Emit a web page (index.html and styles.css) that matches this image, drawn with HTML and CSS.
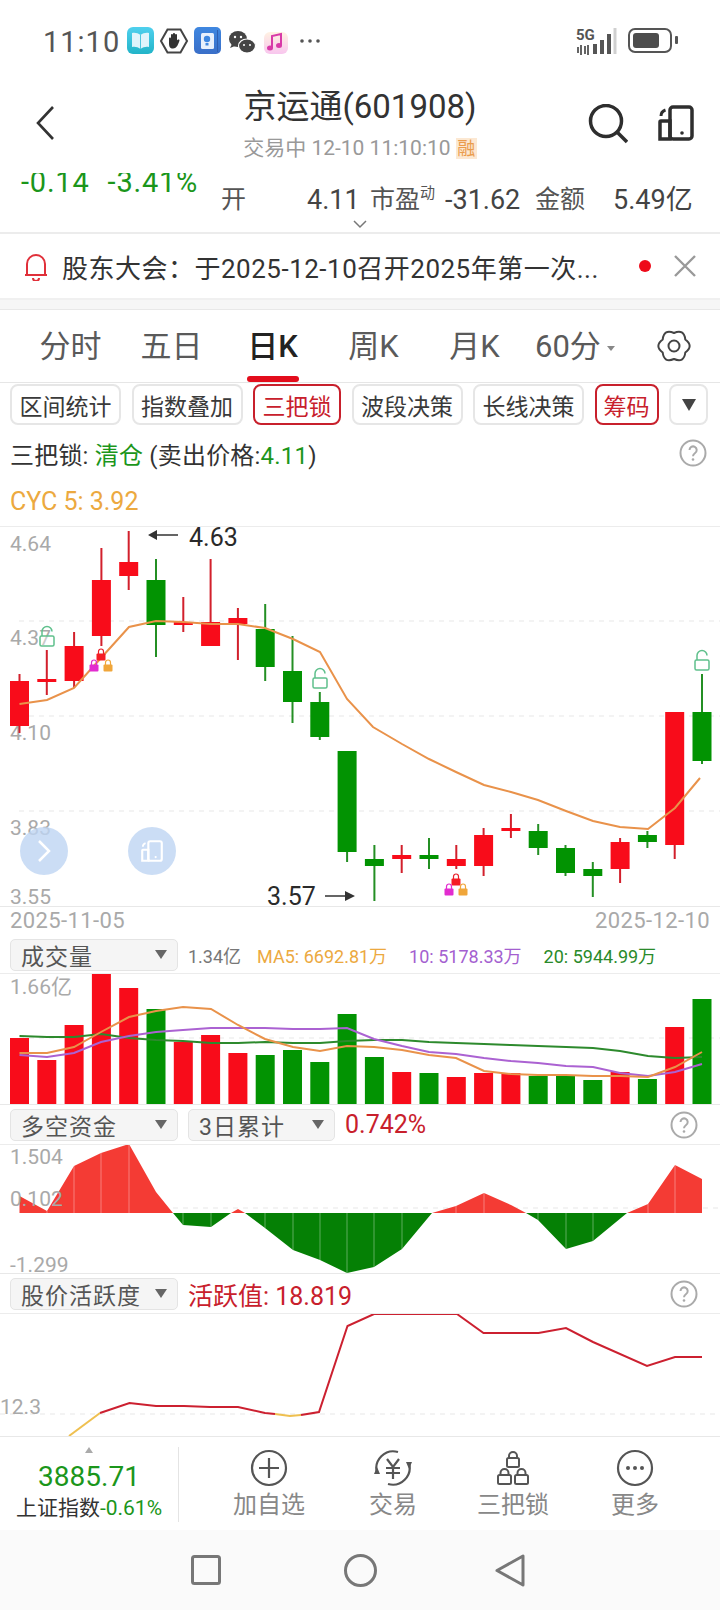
FILE: index.html
```html
<!DOCTYPE html>
<html lang="zh-CN">
<head>
    <meta charset="UTF-8">
    <meta name="viewport" content="width=device-width, initial-scale=1.0">
    <title>京运通(601908)</title>
    <link rel="stylesheet" href="styles.css">
</head>
<body>
<svg class="defs" width="0" height="0">
    <defs>
        <linearGradient id="book-bg" x1="0" y1="0" x2="0" y2="1"><stop offset="0" stop-color="#4fd0ee"/><stop offset="1" stop-color="#22b4c8"/></linearGradient>
        <linearGradient id="note-bg" x1="0" y1="0" x2="0" y2="1"><stop offset="0" stop-color="#3f87e0"/><stop offset="1" stop-color="#3a6fc8"/></linearGradient>
        <linearGradient id="music-bg" x1="0" y1="0" x2="0" y2="1"><stop offset="0" stop-color="#fff2e2"/><stop offset="1" stop-color="#f8c6ee"/></linearGradient>
        <symbol id="lock-open" viewBox="0 0 16 22">
            <path d="M3 11V6.500a5 5 0 0 1 10 0" fill="none" stroke="#5fc08c" stroke-width="1.500"/>
            <rect x="1" y="11" width="14" height="10" rx="1.500" fill="#fff" fill-opacity=".4" stroke="#5fc08c" stroke-width="1.500"/>
        </symbol>
        <symbol id="lock-red" viewBox="0 0 10 13">
            <path d="M2.500 6V3.500a2.500 2.500 0 0 1 5 0V6" fill="none" stroke="#e8202a" stroke-width="1.200"/>
            <rect x=".5" y="5.500" width="9" height="7" rx="1" fill="#f51c24"/>
        </symbol>
        <symbol id="lock-pink" viewBox="0 0 10 13">
            <path d="M2.500 6V3.500a2.500 2.500 0 0 1 5 0V6" fill="none" stroke="#e22ccf" stroke-width="1.200"/>
            <rect x=".5" y="5.500" width="9" height="7" rx="1" fill="#e22ccf"/>
        </symbol>
        <symbol id="lock-orange" viewBox="0 0 10 13">
            <path d="M2.500 6V3.500a2.500 2.500 0 0 1 5 0V6" fill="none" stroke="#f0a63a" stroke-width="1.200"/>
            <rect x=".5" y="5.500" width="9" height="7" rx="1" fill="#f0a63a"/>
        </symbol>
        <symbol id="help" viewBox="0 0 28 28">
            <circle cx="14" cy="14" r="12.500" fill="none" stroke="#aaa" stroke-width="2"/>
            <path d="M10.500 11a3.600 3.600 0 1 1 5.600 3c-1.400 1-2.100 1.600-2.100 3.200" fill="none" stroke="#aaa" stroke-width="2"/>
            <circle cx="14" cy="20.500" r="1.300" fill="#aaa"/>
        </symbol>
        <symbol id="rotate" viewBox="0 0 36 36">
            <rect x="12" y="2" width="22" height="32" rx="3" fill="none" stroke="currentColor" stroke-width="3.500"/>
            <path d="M2 34V17a1 1 0 0 1 1-1h9v18z" fill="none" stroke="currentColor" stroke-width="3.500"/>
            <path d="M3 11c0-3 1.500-5 4.500-6" fill="none" stroke="currentColor" stroke-width="3"/>
            <circle cx="24" cy="28" r="1.800" fill="currentColor"/>
        </symbol>
    </defs>
</svg>

<div class="status">
    <span class="status-time">11:10</span>
    <svg class="status-apps" width="280" height="30" viewBox="0 0 280 30">
        <rect x="0" y="1" width="27" height="27" rx="6" fill="url(#book-bg)"/>
        <path d="M13.500 9C11 7 8 6.500 5 7v14c3-.5 6 0 8.500 2 2.500-2 5.500-2.500 8.500-2V7c-3-.5-6 0-8.500 2z" fill="#dff4fb"/>
        <path d="M13.500 9v14" stroke="#4fc6de" stroke-width="1"/>
        <path d="M34 15l6.500-11.500h13L60 15l-6.500 11.500h-13z" fill="#fff" stroke="#444" stroke-width="2"/>
        <path d="M42 12.500c0-1.500 2-1.500 2 0V9c0-1.500 2-1.500 2 0V8c0-1.500 2-1.500 2 0v1c0-1.500 2-1.500 2 0v5.500c.5-1 2.500-1.500 2.500 0-1 3-2.500 8-6.500 8-3 0-4-2-4-5z" fill="#333"/>
        <rect x="67" y="1" width="27" height="27" rx="5" fill="url(#note-bg)"/>
        <rect x="74" y="7" width="13" height="16" rx="1.500" fill="#e8f0fc"/>
        <circle cx="80" cy="13" r="3.200" fill="#3f87e0"/>
        <rect x="78.500" y="17" width="3" height="2.500" fill="#3f87e0"/>
        <rect x="90" y="4" width="1" height="22" fill="#2f5fb0"/>
        <ellipse cx="111" cy="13" rx="9" ry="8" fill="#444"/>
        <path d="M105 18l-2 4 5-2z" fill="#444"/>
        <ellipse cx="120" cy="20" rx="8.500" ry="7" fill="#444" stroke="#fff" stroke-width="1.200"/>
        <circle cx="108" cy="11" r="1.200" fill="#fff"/>
        <circle cx="114" cy="11" r="1.200" fill="#fff"/>
        <circle cx="117" cy="19" r="1" fill="#fff"/>
        <circle cx="123" cy="19" r="1" fill="#fff"/>
        <rect x="137" y="6" width="24" height="22" rx="6" fill="url(#music-bg)"/>
        <path d="M145 22V10l9-2v11" fill="none" stroke="#d83aa8" stroke-width="2"/>
        <ellipse cx="143" cy="22" rx="3" ry="2.500" fill="#d83aa8"/>
        <ellipse cx="152" cy="19.500" rx="3" ry="2.500" fill="#d83aa8"/>
        <circle cx="175" cy="15" r="1.800" fill="#555"/>
        <circle cx="183" cy="15" r="1.800" fill="#555"/>
        <circle cx="191" cy="15" r="1.800" fill="#555"/>
    </svg>
    <svg class="status-signal" width="102" height="30" viewBox="0 0 102 30">
        <text class="net-text" x="0" y="13">5G</text>
        <path d="M2 20v6M5 18v10M9 19v8M12 18v10" stroke="#555" stroke-width="1.800"/>
        <path d="M19 17v10M26 13v14M33 7v20" stroke="#555" stroke-width="4"/>
        <path d="M39 1v26" stroke="#d0d0d0" stroke-width="3"/>
        <rect x="53" y="2" width="42" height="23" rx="6" fill="none" stroke="#555" stroke-width="2"/>
        <rect x="57" y="6" width="26" height="15" rx="3" fill="#4d4d4d"/>
        <rect x="99" y="9" width="3" height="8" rx="1" fill="#555"/>
    </svg>
</div>

<header class="head">
    <svg class="back" width="20" height="36" viewBox="0 0 20 36">
        <path d="M18 2L3 18l15 16" fill="none" stroke="#333" stroke-width="2.600"/>
    </svg>
    <div class="head-title">
        <h1>京运通(601908)</h1>
        <p>交易中 12-10 11:10:10 <span class="badge">融</span></p>
    </div>
    <div class="head-tools">
        <svg width="40" height="40" viewBox="0 0 40 40">
            <circle cx="18" cy="17" r="15.500" fill="none" stroke="#2e2e2e" stroke-width="3.500"/>
            <path d="M29 28l10 10" stroke="#2e2e2e" stroke-width="3.500"/>
        </svg>
        <svg class="head-rotate" width="36" height="36"><use href="#rotate"/></svg>
    </div>
</header>

<section class="quote">
    <div class="change">
        <span>-0.14</span>
        <span>-3.41%</span>
    </div>
    <div class="stats">
        <span class="stat-label">开</span>
        <span>4.11</span>
        <span class="stat-label">市盈<sup>动</sup></span>
        <span>-31.62</span>
        <span class="stat-label">金额</span>
        <span>5.49亿</span>
    </div>
    <svg class="more-arrow" width="14" height="9" viewBox="0 0 14 9">
        <path d="M1 1l6 6 6-6" fill="none" stroke="#777" stroke-width="1.500"/>
    </svg>
</section>

<section class="notice">
    <svg width="24" height="29" viewBox="0 0 24 29">
        <path d="M3 23V12a9 9 0 0 1 18 0v11z" fill="none" stroke="#e0303a" stroke-width="2" stroke-linejoin="round"/>
        <path d="M1 23h22" stroke="#e0303a" stroke-width="2"/>
        <path d="M9 26a3 3 0 0 0 6 0" fill="none" stroke="#e0303a" stroke-width="2"/>
    </svg>
    <p class="notice-text">股东大会：于2025-12-10召开2025年第一次...</p>
    <span class="notice-dot"></span>
    <svg class="notice-close" width="22" height="22" viewBox="0 0 22 22">
        <path d="M1 1l20 20M21 1L1 21" stroke="#999" stroke-width="2.400"/>
    </svg>
</section>

<nav class="tabs">
    <span class="tab">分时</span>
    <span class="tab">五日</span>
    <span class="tab tab-active">日K</span>
    <span class="tab">周K</span>
    <span class="tab">月K</span>
    <span class="tab tab-menu">60分<i class="tab-caret"></i></span>
    <svg class="gear" width="34" height="34" viewBox="0 0 34 34">
        <path d="M28.300 23.500Q37 17 28.300 10.500Q27 -.3 17 4Q7 -.3 5.700 10.500Q-3 17 5.700 23.500Q7 34.300 17 30Q27 34.300 28.300 23.500z" fill="none" stroke="#444" stroke-width="2" stroke-linejoin="round"/>
        <circle cx="17" cy="17" r="5.500" fill="none" stroke="#444" stroke-width="2"/>
    </svg>
</nav>

<div class="chips">
    <span class="chip chip-4">区间统计</span>
    <span class="chip chip-4">指数叠加</span>
    <span class="chip chip-3 chip-on">三把锁</span>
    <span class="chip chip-4">波段决策</span>
    <span class="chip chip-4">长线决策</span>
    <span class="chip chip-2 chip-on">筹码</span>
    <span class="chip chip-more"><i class="chip-caret"></i></span>
</div>

<div class="signal">
    <p>三把锁: <span class="green">清仓</span> (卖出价格:<span class="green">4.11</span>)</p>
    <svg width="28" height="28"><use href="#help"/></svg>
</div>
<p class="cyc">CYC 5: 3.92</p>

<section class="panel panel-main">
    <svg class="plot" width="720" height="379" viewBox="0 527 720 379">
        <path class="grid" d="M19 621H720M19 716H720M19 811H720"/>
        <text class="axis" x="10" y="551">4.64</text>
        <text class="axis" x="10" y="645">4.37</text>
        <text class="axis" x="10" y="740">4.10</text>
        <text class="axis" x="10" y="835">3.83</text>
        <text class="axis" x="10" y="904">3.55</text>
        <path class="wick-red" d="M19.500 674V733M46.800 650V695M74.100 632V688M101.400 548V646M128.700 531V590M183.300 597V632M210.600 559V646M237.900 608V660M401.700 845V873M456.300 845V869M483.600 828V876M510.900 814V838M620.100 838V883M674.700 712V859"/>
        <path class="wick-green" d="M156 559V657M265.200 604V681M292.500 636V723M319.800 692V740M347.100 751V862M374.400 845V901M429 838V869M538.200 824V855M565.500 845V876M592.800 862V897M647.400 831V848M702 674V764"/>
        <path class="body-red" d="M10 681h19v45h-19zM37.300 679h19v3h-19zM64.600 646h19v35h-19zM91.900 580h19v56h-19zM119.200 562h19v14h-19zM173.800 622h19v3h-19zM201.100 622h19v24h-19zM228.400 618h19v6h-19zM392.200 855h19v4h-19zM446.800 859h19v7h-19zM474.100 835h19v31h-19zM501.400 828h19v3h-19zM610.600 842h19v27h-19zM665.200 712h19v133h-19z"/>
        <path class="body-green" d="M146.500 580h19v45h-19zM255.700 629h19v38h-19zM283 671h19v31h-19zM310.300 702h19v35h-19zM337.600 751h19v101h-19zM364.900 859h19v7h-19zM419.500 855h19v4h-19zM528.700 831h19v17h-19zM556 848h19v25h-19zM583.300 869h19v7h-19zM637.900 835h19v7h-19zM692.500 712h19v49h-19z"/>
        <polyline class="line-orange" points="19.500,704 47,700 74,688 101,658 129,627 156,621 183,622 211,624 238,624 265,628 293,639 320,652 347,699 373,727 402,744 429,759 456,772 484,785 511,792 538,800 566,811 593,821 620,827 648,829 675,808 700,778"/>
        <use href="#lock-open" x="39" y="625" width="16" height="22"/>
        <use href="#lock-open" x="312" y="667" width="16" height="22"/>
        <use href="#lock-open" x="694" y="649" width="16" height="22"/>
        <use href="#lock-red" x="96" y="648" width="10" height="13"/>
        <use href="#lock-pink" x="89" y="659" width="10" height="13"/>
        <use href="#lock-orange" x="103" y="659" width="10" height="13"/>
        <use href="#lock-red" x="451" y="873" width="10" height="13"/>
        <use href="#lock-pink" x="444" y="883" width="10" height="13"/>
        <use href="#lock-orange" x="458" y="883" width="10" height="13"/>
        <path class="mark-line" d="M155 535H178M325 896H345"/>
        <path class="mark-head" d="M148 535l9-5v10zM355 896l-10-5v10z"/>
        <text class="mark" x="189" y="546">4.63</text>
        <text class="mark" x="267" y="905">3.57</text>
    </svg>
    <span class="float-btn float-next">
        <svg width="14" height="24" viewBox="0 0 14 24"><path d="M2 2l10 10L2 22" fill="none" stroke="#fff" stroke-width="2.500"/></svg>
    </span>
    <span class="float-btn float-rotate">
        <svg width="22" height="22"><use href="#rotate"/></svg>
    </span>
</section>
<div class="dates">
    <span>2025-11-05</span>
    <span>2025-12-10</span>
</div>

<div class="tool-row">
    <span class="select select-wide">成交量<i class="select-caret"></i></span>
    <span class="vol-now">1.34亿</span>
    <span class="vol-ma orange">MA5: 6692.81万</span>
    <span class="vol-ma purple">10: 5178.33万</span>
    <span class="vol-ma dark-green">20: 5944.99万</span>
</div>
<section class="panel panel-vol">
    <svg class="plot" width="720" height="130" viewBox="0 974 720 130">
        <path class="grid" d="M19 1038H720"/>
        <text class="axis" x="10" y="994">1.66亿</text>
        <path class="body-red" d="M10 1038h19v66h-19zM37.300 1060h19v44h-19zM64.600 1025h19v79h-19zM91.900 974h19v130h-19zM119.200 988h19v116h-19zM173.800 1042h19v62h-19zM201.100 1035h19v69h-19zM228.400 1053h19v51h-19zM392.200 1072h19v32h-19zM446.800 1077h19v27h-19zM474.100 1073h19v31h-19zM501.400 1073h19v31h-19zM610.600 1072h19v32h-19zM665.200 1027h19v77h-19z"/>
        <path class="body-green" d="M146.500 1009h19v95h-19zM255.700 1055h19v49h-19zM283 1050h19v54h-19zM310.300 1062h19v42h-19zM337.600 1014h19v90h-19zM364.900 1057h19v47h-19zM419.500 1073h19v31h-19zM528.700 1076h19v28h-19zM556 1076h19v28h-19zM583.300 1080h19v24h-19zM637.900 1079h19v25h-19zM692.500 999h19v105h-19z"/>
        <polyline class="line-dark-green" points="19.500,1036 47,1037 74,1037 101,1034 129,1038 156,1040 183,1041 211,1043 238,1043 265,1042 293,1043 320,1043 347,1041 374,1040 402,1040 429,1042 456,1043 484,1044 511,1045 538,1046 566,1047 593,1048 620,1051 648,1056 675,1058 702,1057"/>
        <polyline class="line-purple" points="19.500,1055 47,1057 74,1053 101,1042 129,1036 156,1032 183,1030 211,1028 238,1028 265,1028 293,1029 320,1029 347,1028 374,1039 402,1046 429,1052 456,1054 484,1058 511,1061 538,1063 566,1066 593,1067 620,1073 648,1076 675,1072 702,1064"/>
        <polyline class="line-orange" points="19.500,1053 47,1053 74,1047 101,1032 129,1017 156,1011 183,1007 211,1009 238,1025 265,1039 293,1047 320,1051 347,1046 374,1047 402,1050 429,1055 456,1058 484,1071 511,1074 538,1075 566,1075 593,1076 620,1076 648,1077 675,1067 702,1052"/>
    </svg>
</section>

<div class="tool-row tool-row-tall">
    <span class="select select-wide">多空资金<i class="select-caret"></i></span>
    <span class="select select-mid">3日累计<i class="select-caret"></i></span>
    <span class="tool-value red">0.742%</span>
    <svg class="tool-help" width="28" height="28"><use href="#help"/></svg>
</div>
<section class="panel panel-money">
    <svg class="plot" width="720" height="128" viewBox="0 1145 720 128">
        <path class="grid" d="M173 1208H720"/>
        <path class="area-red" d="M19.500 1196L47 1211 74 1166 101 1153 129 1144 156 1192 173 1213H19.500zM231 1213L238 1209 245 1213zM432 1213L456 1206 484 1193 511 1205 526 1213zM627 1213L648 1204 675 1165 702 1179V1213z"/>
        <path class="area-green" d="M173 1213L183 1225 211 1227 231 1213zM245 1213L265 1228 293 1250 320 1260 347 1273 374 1267 402 1249 432 1213zM526 1213L538 1220 566 1249 593 1241 627 1213z"/>
        <path class="area-ticks" d="M47 1211V1213M74 1166V1213M101 1153V1213M129 1144V1213M183 1213V1225M211 1213V1227M265 1213V1228M293 1213V1250M320 1213V1260M347 1213V1273M374 1213V1267M402 1213V1249M456 1206V1213M484 1193V1213M538 1213V1220M566 1213V1249M593 1213V1241M648 1204V1213M675 1165V1213"/>
        <text class="axis" x="10" y="1164">1.504</text>
        <text class="axis" x="10" y="1206">0.102</text>
        <text class="axis" x="10" y="1272">-1.299</text>
    </svg>
</section>

<div class="tool-row tool-row-tall">
    <span class="select select-wide">股价活跃度<i class="select-caret"></i></span>
    <span class="tool-value red">活跃值: 18.819</span>
    <svg class="tool-help" width="28" height="28"><use href="#help"/></svg>
</div>
<section class="panel panel-active">
    <svg class="plot" width="720" height="122" viewBox="0 1314 720 122">
        <path class="grid" d="M0 1414H720"/>
        <text class="axis" x="0" y="1414">12.3</text>
        <polyline class="line-yellow" points="69,1436 100,1413"/>
        <polyline class="line-yellow" points="275,1414 290,1416 301,1415"/>
        <polyline class="line-red" points="100,1413 129.500,1403 156,1406 184,1406 210,1407 238,1407 265,1413 275,1414"/>
        <polyline class="line-red" points="301,1415 319,1412 347.500,1326 374,1314 457,1314 483.500,1333 538.500,1333 566,1328 593,1342 647,1366 675,1357 702,1357"/>
    </svg>
</section>

<footer class="actions">
    <div class="index">
        <i class="index-caret"></i>
        <strong>3885.71</strong>
        <p>上证指数<span class="green">-0.61%</span></p>
    </div>
    <div class="action-list">
        <div class="action">
            <svg width="38" height="38" viewBox="0 0 38 38">
                <circle cx="19" cy="19" r="17" fill="none" stroke="#555" stroke-width="2.200"/>
                <path d="M19 9v20M9 19h20" stroke="#555" stroke-width="2.200"/>
            </svg>
            <span>加自选</span>
        </div>
        <div class="action action-trade">
            <svg width="38" height="38" viewBox="0 0 38 38">
                <path d="M3 24A17 17 0 0 1 24 3" fill="none" stroke="#555" stroke-width="2.200"/>
                <path d="M35 14A17 17 0 0 1 14 35" fill="none" stroke="#555" stroke-width="2.200"/>
                <path d="M35 20l-3-7 6 0zM3 18l3 7-6 0z" fill="#555"/>
                <path d="M13 10l6 8 6-8M12 19h14M12 24h14M19 18v12" fill="none" stroke="#555" stroke-width="2.200"/>
            </svg>
            <span>交易</span>
        </div>
        <div class="action">
            <svg width="32" height="38" viewBox="0 0 32 38">
                <path d="M12 9V7a4 4 0 0 1 8 0v2M3.500 26v-2a4 4 0 0 1 8 0v2M20.500 26v-2a4 4 0 0 1 8 0v2" fill="none" stroke="#555" stroke-width="2"/>
                <rect x="10" y="9" width="12" height="9" rx="1.500" fill="none" stroke="#555" stroke-width="2"/>
                <rect x="1" y="26" width="13" height="9" rx="1.500" fill="none" stroke="#555" stroke-width="2"/>
                <rect x="18" y="26" width="13" height="9" rx="1.500" fill="none" stroke="#555" stroke-width="2"/>
            </svg>
            <span>三把锁</span>
        </div>
        <div class="action">
            <svg width="38" height="38" viewBox="0 0 38 38">
                <circle cx="19" cy="19" r="17" fill="none" stroke="#555" stroke-width="2.200"/>
                <circle cx="12" cy="19" r="2" fill="#555"/>
                <circle cx="19" cy="19" r="2" fill="#555"/>
                <circle cx="26" cy="19" r="2" fill="#555"/>
            </svg>
            <span>更多</span>
        </div>
    </div>
</footer>

<div class="sysnav">
    <svg width="30" height="30" viewBox="0 0 30 30"><rect x="1.500" y="1.500" width="27" height="27" rx="2" fill="none" stroke="#777" stroke-width="3"/></svg>
    <svg width="33" height="33" viewBox="0 0 33 33"><circle cx="16.500" cy="16.500" r="15" fill="none" stroke="#777" stroke-width="3"/></svg>
    <svg class="sysnav-back" width="30" height="33" viewBox="0 0 30 33"><path d="M28 2v29L2 16.500z" fill="none" stroke="#777" stroke-width="3" stroke-linejoin="round"/></svg>
</div>
</body>
</html>
```

FILE: styles.css
```css
/* General Styles */
* {
    box-sizing: border-box;
}

html,
body {
    margin: 0;
    padding: 0;
}

body {
    width: 720px;
    height: 1610px;
    overflow: hidden;
    background-color: #fff;
    color: #333;
    font-family: Roboto, "Noto Sans CJK SC", sans-serif;
}

p,
h1 {
    margin: 0;
    font-weight: 400;
}

svg {
    display: block;
    flex-shrink: 0;
}

.defs {
    position: absolute;
}

.green {
    color: #1b961b;
}

.red {
    color: #c8202c;
}

.orange {
    color: #eca93f;
}

.purple {
    color: #a45fd0;
}

.dark-green {
    color: #2a8a2a;
}

/* Status bar */
.status {
    height: 84px;
    display: flex;
    align-items: center;
    padding-left: 43px;
}

.status-time {
    width: 84px;
    font-size: 29px;
    letter-spacing: 1px;
    color: #555;
}

.status-apps {
    margin-top: -2px;
}

.status-signal {
    margin-left: 169px;
}

.net-text {
    font-size: 15px;
    font-weight: 700;
    fill: #555;
}

/* Header */
.head {
    height: 89px;
    display: grid;
    grid-template-columns: 1fr auto 1fr;
    padding: 0 26px;
}

.back {
    margin: 21px 0 0 9px;
}

.head-title {
    text-align: center;
}

.head-title h1 {
    font-size: 33px;
    line-height: 46px;
    color: #333;
}

.head-title p {
    margin-top: 4px;
    font-size: 21px;
    line-height: 28px;
    color: #999;
}

.badge {
    display: inline-block;
    width: 21px;
    height: 21px;
    line-height: 21px;
    font-size: 18px;
    background-color: #fce8d2;
    color: #ea9c4c;
}

.head-tools {
    display: flex;
    justify-content: flex-end;
    gap: 30px;
    padding-top: 20px;
}

.head-rotate {
    color: #2e2e2e;
    margin-top: 1px;
}

/* Quote row */
.quote {
    position: relative;
    height: 61px;
    display: flex;
    padding-left: 21px;
    overflow: hidden;
    border-bottom: 2px solid #ececec;
}

.change {
    width: 200px;
    display: flex;
    gap: 18px;
    height: 20px;
    margin-top: -1px;
    line-height: 20px;
    font-size: 29px;
    letter-spacing: .8px;
    color: #1b961b;
}

.stats {
    display: grid;
    grid-template-columns: 86px 63px 75px 90px 78px auto;
    margin-top: 17px;
    height: 20px;
    line-height: 20px;
    font-size: 27px;
    color: #444;
}

.stat-label {
    font-size: 25px;
    color: #555;
}

.stat-label sup {
    font-size: 15px;
    line-height: 0;
    vertical-align: 10px;
}

.more-arrow {
    position: absolute;
    left: 353px;
    bottom: 3px;
}

/* Notice */
.notice {
    height: 66px;
    display: flex;
    align-items: center;
    padding-left: 24px;
    border-bottom: 2px solid #f0f0f0;
}

.notice-text {
    width: 577px;
    margin-left: 14px;
    font-size: 26px;
    letter-spacing: .5px;
    color: #333;
    white-space: nowrap;
}

.notice-dot {
    width: 12px;
    height: 12px;
    border-radius: 50%;
    background-color: #ee0a1a;
}

.notice-close {
    margin-left: 23px;
}

/* Period tabs */
.tabs {
    position: relative;
    height: 83px;
    display: grid;
    grid-template-columns: repeat(5, 101px) 118px auto;
    align-items: center;
    padding: 10px 0 0 20px;
    background: linear-gradient(#f6f6f6 9px, #e8e8e8 9px, #e8e8e8 10px, #fff 10px);
    border-bottom: 1px solid #e6e6e6;
}

.tab {
    position: relative;
    height: 72px;
    text-align: center;
    font-size: 31px;
    line-height: 74px;
    color: #5a5a5a;
}

.tab-active {
    color: #222;
    font-weight: 500;
}

.tab-active::after {
    content: "";
    position: absolute;
    left: 25px;
    bottom: 0;
    width: 52px;
    height: 6px;
    border-radius: 3px;
    background-color: #e30d1c;
}

.tab-menu {
    text-align: left;
    padding-left: 10px;
    white-space: nowrap;
}

.tab-caret {
    display: inline-block;
    margin-left: 6px;
    vertical-align: 6px;
    border-style: solid;
    border-width: 5px 4px 0;
    border-color: #888 transparent transparent;
}

.gear {
    margin-left: 14px;
}

/* Indicator chips */
.chips {
    display: flex;
    gap: 10.500px;
    height: 47px;
    padding: 1px 10px 0;
}

.chip {
    height: 41px;
    display: flex;
    align-items: center;
    justify-content: center;
    border: 2px solid #e6e6e6;
    border-radius: 8px;
    font-size: 23px;
    color: #3a3a3a;
}

.chip-4 {
    width: 111px;
}

.chip-3 {
    width: 88px;
}

.chip-2 {
    width: 64px;
}

.chip-more {
    width: 39px;
}

.chip-on {
    border-color: #c8202c;
    color: #c8202c;
}

.chip-caret {
    border-style: solid;
    border-width: 12px 7px 0;
    border-color: #444 transparent transparent;
}

/* Signal lines */
.signal {
    height: 46px;
    margin-bottom: 2px;
    display: flex;
    align-items: center;
    justify-content: space-between;
    padding: 0 13px 0 10px;
    font-size: 24px;
    letter-spacing: .2px;
    color: #333;
}

.cyc {
    height: 48px;
    padding-left: 10px;
    font-size: 25px;
    line-height: 48px;
    color: #eca93f;
}

/* Chart panels */
.panel {
    position: relative;
    border-bottom: 1px solid #e8e8e8;
}

.panel-main {
    border-top: 1px solid #ececec;
}

.plot {
    overflow: hidden;
}

.grid {
    fill: none;
    stroke: #efefef;
    stroke-width: 1.500;
    stroke-dasharray: 5 5;
}

.axis {
    font-size: 21px;
    fill: #a9a9a9;
}

.wick-red,
.wick-green {
    fill: none;
    stroke-width: 2;
}

.wick-red {
    stroke: #d2202c;
}

.wick-green {
    stroke: #248f24;
}

.body-red {
    fill: #f80c1a;
}

.body-green {
    fill: #029302;
}

.line-orange,
.line-purple,
.line-dark-green,
.line-red,
.line-yellow {
    fill: none;
    stroke-width: 2;
}

.line-orange {
    stroke: #e9924a;
}

.line-purple {
    stroke: #ab62d2;
}

.line-dark-green {
    stroke: #2d8a2d;
}

.line-red {
    stroke: #cc2030;
}

.line-yellow {
    stroke: #efc050;
}

.mark {
    font-size: 25px;
    fill: #2a2a2a;
}

.mark-line {
    stroke: #333;
    stroke-width: 1.500;
}

.mark-head {
    fill: #333;
}

.area-red {
    fill: #f43b34;
}

.area-green {
    fill: #058005;
}

.area-ticks {
    stroke: #fff;
    stroke-opacity: .35;
    stroke-width: 1;
}

/* Floating buttons over the chart */
.float-btn {
    position: absolute;
    top: 300px;
    width: 48px;
    height: 48px;
    display: flex;
    align-items: center;
    justify-content: center;
    border-radius: 50%;
    background-color: rgba(190, 212, 243, .8);
    color: #fff;
}

.float-next {
    left: 20px;
}

.float-rotate {
    left: 128px;
}

.dates {
    height: 29px;
    display: flex;
    justify-content: space-between;
    padding: 0 10px;
    font-size: 22px;
    letter-spacing: .4px;
    line-height: 27px;
    color: #a9a9a9;
}

/* Selector rows between panels */
.tool-row {
    height: 38px;
    display: flex;
    align-items: center;
    gap: 10px;
    padding: 0 10px;
    border-bottom: 1px solid #ececec;
    font-size: 18px;
}

.tool-row-tall {
    height: 40px;
}

.tool-help {
    margin-left: auto;
    margin-right: 12px;
}

.select {
    height: 32px;
    display: flex;
    align-items: center;
    justify-content: space-between;
    padding: 0 10px;
    border: 1px solid #e4e4e4;
    border-radius: 5px;
    background-color: #f5f5f5;
    font-size: 23px;
    letter-spacing: 1px;
    color: #555;
}

.select-wide {
    width: 168px;
}

.select-mid {
    width: 147px;
}

.select-caret {
    border-style: solid;
    border-width: 9px 6px 0;
    border-color: #666 transparent transparent;
}

.vol-now {
    margin-right: -6px;
    color: #777;
}

.vol-ma {
    margin-left: 12px;
}

.tool-value {
    font-size: 25px;
    white-space: nowrap;
}

/* Bottom actions */
.actions {
    height: 93px;
    display: flex;
}

.index {
    position: relative;
    width: 179px;
    height: 75px;
    margin-top: 10px;
    border-right: 1px solid #e4e4e4;
    text-align: center;
}

.index strong {
    display: block;
    margin-top: 12px;
    font-size: 28px;
    font-weight: 400;
    line-height: 36px;
    color: #1b961b;
}

.index p {
    font-size: 21px;
    line-height: 26px;
    color: #333;
    white-space: nowrap;
}

.index-caret {
    position: absolute;
    left: 85px;
    top: 0;
    border-style: solid;
    border-width: 0 4px 6px;
    border-color: transparent transparent #aaa;
}

.action-list {
    display: grid;
    grid-template-columns: repeat(4, 122px);
    padding-left: 29px;
}

.action {
    display: flex;
    flex-direction: column;
    align-items: center;
    padding-top: 12px;
    font-size: 24px;
    line-height: 36px;
    color: #888;
}

.action-trade {
    margin-left: 4px;
}

/* System navigation */
.sysnav {
    height: 80px;
    display: flex;
    align-items: center;
    gap: 123px;
    padding-left: 191px;
    background-color: #fafafa;
}

.sysnav-back {
    margin-left: -5px;
}
```
